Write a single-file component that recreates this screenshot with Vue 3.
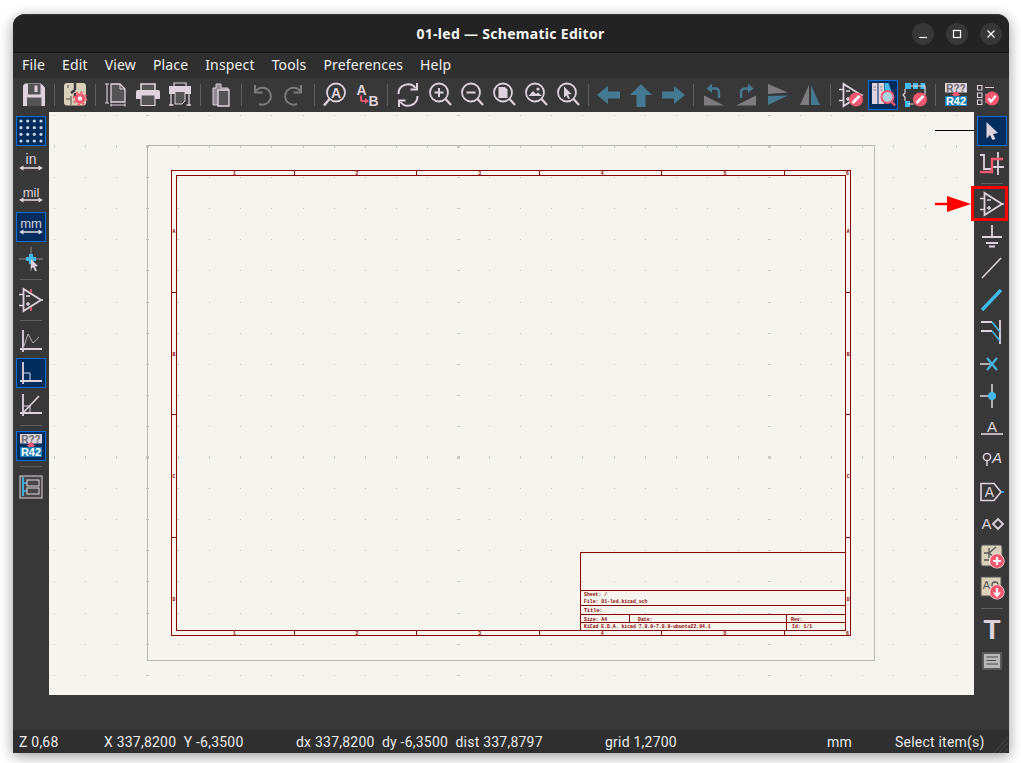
<template>
  <div class="desktop">
    <div class="window">
      <header class="titlebar">
        <span class="title">01-led — Schematic Editor</span>
        <div class="win-controls">
          <button class="win-btn"><svg width="10" height="10" viewBox="0 0 10 10"><path d="M1 8.5H9" stroke="#fff" stroke-width="1.2" /></svg></button>
          <button class="win-btn"><svg width="10" height="10" viewBox="0 0 10 10"><rect x="1.5" y="1.5" width="7" height="7" fill="none" stroke="#fff" stroke-width="1.2" /></svg></button>
          <button class="win-btn"><svg width="10" height="10" viewBox="0 0 10 10"><path d="M1.5 1.5L8.5 8.5M8.5 1.5L1.5 8.5" stroke="#fff" stroke-width="1.2" /></svg></button>
        </div>
      </header>

      <nav class="menubar">
        <span v-for="m in menus" :key="m" class="menu-item">{{ m }}</span>
      </nav>

      <div class="toolbar top">
        <template v-for="(t, i) in topTools" :key="i">
          <span v-if="t === '|'" class="sep"></span>
          <button v-else class="tool" :class="{ active: activeTools.includes(t) }">
            <svg width="24" height="24" viewBox="0 0 24 24" v-html="icons[t]"></svg>
          </button>
        </template>
      </div>

      <div class="middle">
        <aside class="toolbar side left">
          <template v-for="(t, i) in leftTools" :key="i">
            <span v-if="t === '|'" class="sep"></span>
            <button v-else class="tool" :class="{ active: activeTools.includes(t) }">
              <svg width="24" height="24" viewBox="0 0 24 24" v-html="icons[t]"></svg>
            </button>
          </template>
        </aside>

        <main class="canvas">
          <svg width="925" height="583" viewBox="49 112 925 583" class="sheet">
            <rect v-for="d in gridDots" :key="d.k" :x="d.x" :y="d.y" :width="d.w" :height="d.h" fill="#cbcbc7" />
            <g shape-rendering="crispEdges" fill="none">
              <rect x="147.5" y="145.5" width="727" height="515" stroke="#b8b8b4" />
              <g stroke="#8b0000">
                <rect x="171.5" y="170.5" width="679" height="465" />
                <rect x="176.5" y="175.5" width="669" height="455" />
                <path d="M580.5 630V552.5H846M580.5 590.5H846M580.5 605.5H846M580.5 614.5H846M580.5 622.5H846M629.5 614.5V622.5M786.5 614.5V630" />
                <path v-for="x in tickX" :key="'x' + x" :d="`M${x}.5 170V176M${x}.5 630V636`" />
                <path v-for="y in tickY" :key="'y' + y" :d="`M171 ${y}.5H177M846 ${y}.5H851`" />
              </g>
            </g>
            <g class="sheet-text">
              <text v-for="(l, i) in '123456'" :key="'t' + i" :x="233 + i * 122.6" y="175">{{ l }}</text>
              <text v-for="(l, i) in '123456'" :key="'b' + i" :x="233 + i * 122.6" y="635">{{ l }}</text>
              <text v-for="(l, i) in 'ABCD'" :key="'l' + i" x="172.6" :y="233 + i * 122.5">{{ l }}</text>
              <text v-for="(l, i) in 'ABCD'" :key="'r' + i" x="846.8" :y="233 + i * 122.5">{{ l }}</text>
              <text x="584" y="595.5">Sheet: /</text>
              <text x="584" y="603">File: 01-led.kicad_sch</text>
              <text x="584" y="611.5" class="big">Title:</text>
              <text x="584" y="621">Size: A4</text>
              <text x="638" y="621">Date:</text>
              <text x="791" y="621">Rev:</text>
              <text x="584" y="628">KiCad E.D.A.  kicad 7.0.9-7.0.9-ubuntu22.04.1</text>
              <text x="792" y="628">Id: 1/1</text>
            </g>
          </svg>
        </main>

        <aside class="toolbar side right">
          <template v-for="(t, i) in rightTools" :key="i">
            <span v-if="t === '|'" class="sep"></span>
            <button v-else class="tool" :class="{ active: activeTools.includes(t) }">
              <svg width="24" height="24" viewBox="0 0 24 24" v-html="icons[t]"></svg>
            </button>
          </template>
        </aside>
      </div>

      <div class="lower"></div>

      <footer class="status">
        <span class="cell c1">Z 0,68</span>
        <span class="cell c2">X 337,8200&nbsp; Y -6,3500</span>
        <span class="cell c3">dx 337,8200&nbsp; dy -6,3500&nbsp; dist 337,8797</span>
        <span class="cell c4">grid 1,2700</span>
        <span class="cell c5">mm</span>
        <span class="cell c6">Select item(s)</span>
        <svg class="grip" width="18" height="22" viewBox="0 0 18 22">
          <path d="M3 22L17 6M8 22L17 11.5M13 22L17 17" stroke="#4c4c4c" stroke-width="1" />
        </svg>
      </footer>

      <!-- tutorial annotations drawn on top of the screenshot -->
      <div class="callout-line"></div>
      <div class="callout-box"></div>
      <svg class="callout-arrow" width="37" height="18" viewBox="0 0 37 18">
        <path d="M0 9H13" stroke="#f00" stroke-width="2.4" />
        <path d="M12 1L36 9L12 17Z" fill="#f00" />
      </svg>
    </div>
  </div>
</template>

<script setup>
const L = '#ded3dd'
const B = '#42b8eb'
const R = '#f4586f'
const D = '#545454'
const T = '#d9d1ba'
const G = '#7d7b7d'
const A = '#457991'

const s = (d, c = L, w = 2) => `<path d="${d}" fill="none" stroke="${c}" stroke-width="${w}"/>`
const f = (d, c = L) => `<path d="${d}" fill="${c}"/>`
const txt = (x, y, str, size, fill = L, extra = '') =>
  `<text x="${x}" y="${y}" font-family="Liberation Sans, sans-serif" font-size="${size}" fill="${fill}" text-anchor="middle" ${extra}>${str}</text>`

const badge = (cx, cy, inner) => `<circle cx="${cx}" cy="${cy}" r="7" fill="${R}"/>` + inner
const pencil = (cx, cy) =>
  badge(cx, cy, s(`M${cx - 3.5} ${cy + 3.5}L${cx + 3.5} ${cy - 3.5}`, '#fff', 2.6))
const mag = inner => `<circle cx="11" cy="9.5" r="9" fill="none" stroke="${L}" stroke-width="1.8"/>` + s('M17.5 16L23 22', L, 2.2) + inner
const opamp = `<path d="M4.5 1V23L22 12Z" fill="none" stroke="${L}" stroke-width="1.8"/>` + s('M0 6.5H4.5M0 17.5H4.5M22 12H24M7 8H11M7 16H11M9 14V18', L, 1.5)
const annotate = f('M1 0H23V9.5H1Z') + txt(12, 8.5, 'R??', 10, '#6a666a', 'font-weight="bold"') +
  f('M9.5 9H14.5V11H16.5L12 15L7.5 11H9.5Z', R) + f('M1 13H23V23H1Z', '#1a7fb5') + txt(12, 22, 'R42', 11, '#fff', 'font-weight="bold"')
const widthArrow = s('M3 17H21', L, 1.6) + f('M0 17L4.5 14.6V19.4ZM24 17L19.5 14.6V19.4Z')

const icons = {
  save: f('M3 .5H19L23 4.5V23H1V2.5Z') + f('M6 1H18.5V11.5H6Z', D) + f('M12.5 2.5H15.5V9H12.5Z') + f('M5 14.5H19.5V23H5Z', D),
  setup: `<rect x="1" y="0" width="22" height="22.5" rx="3" fill="${T}"/>` + s('M12 0V7M12 7L8 10M12 10V14', '#3a3a3a', 2.4) + s('M5 2V5M3 16H8M8 13V22', '#77736a', 1.4) +
    `<circle cx="17" cy="15.5" r="6.4" fill="none" stroke="${R}" stroke-width="1.8" stroke-dasharray="2.2 2.8"/><circle cx="17" cy="15.5" r="3.8" fill="none" stroke="${R}" stroke-width="3"/><circle cx="17" cy="15.5" r="1.8" fill="#fff"/>`,
  plotPage: s('M1 1H5M3 1V20M1 20H5M7 22H21M7 20.5V23.5M21 20.5V23.5', L, 1.1) + `<path d="M7 1H16L21 6V19H7Z" fill="${D}" stroke="${L}" stroke-width="1.3"/>` + s('M16 1V6H21', L, 1),
  print: `<path d="M5 7V1H19V7" fill="${D}" stroke="${L}" stroke-width="1.6"/>` + f('M2 7H22Q24 7 24 9V16H0V9Q0 7 2 7Z') + `<path d="M5 12H19V22.5H5Z" fill="${D}" stroke="${L}" stroke-width="1.2"/>`,
  plot: f('M1 3H23V11H1Z') + `<path d="M6 3V0H18V3" fill="none" stroke="${L}" stroke-width="1.2"/>` + s('M3 11V22M21 11V22M1 22H5.5M18.5 22H23', L, 1.3) + f('M7 9H17V18L14 21H7Z', D) + s('M7 9V21H14L17 18V9', L, 1),
  paste: `<path d="M7 1H12V5H19V22H4V5H7Z" fill="#8d8a8d" stroke="${L}" stroke-width="1"/>` + `<path d="M9 7H20V23H9Z" fill="${D}" stroke="${L}" stroke-width="1.4"/>`,
  undo: s('M5 9A8.5 8.5 0 1 1 9 21', G, 2) + s('M5 2V9.5H12.5', G, 2),
  redo: s('M19 9A8.5 8.5 0 1 0 15 21', G, 2) + s('M19 2V9.5H11.5', G, 2),
  find: `<circle cx="13" cy="9.5" r="9" fill="none" stroke="${L}" stroke-width="1.8"/>` + s('M7 15.5L1 22.5', L, 2.4) + txt(13, 14.5, 'A', 14, L, 'font-weight="bold"'),
  replace: txt(6.5, 11.5, 'A', 14, L, 'font-weight="bold"') + txt(18.5, 22.5, 'B', 14, L, 'font-weight="bold"') + s('M6 12.5V16.5Q6 18 8 18H11', R, 2) + f('M10 15L14 18L10 21Z', R),
  refresh: s('M2.5 11A9.5 9.5 0 0 1 19.5 5M21.5 13A9.5 9.5 0 0 1 4.5 19', L, 2) + s('M21 0V6.5H14.5M3 24V17.5H9.5', L, 2),
  zoomIn: mag(s('M6.5 9.5H15.5M11 5V14', L, 2)),
  zoomOut: mag(s('M6.5 9.5H15.5', L, 2)),
  zoomFit: mag(f('M6.5 4H13L15.5 6.5V15H6.5Z')),
  zoomObjects: mag(f('M4.5 13L9 8L12 11L14 9.5L18 13Z') + `<circle cx="14" cy="6" r="1.6" fill="${L}"/>`),
  zoomSel: mag(f('M8 3.5L15.5 11L12 11.5L14 15.5L12 16L10.5 12.5L8 14.5Z')),
  left: f('M0 12L11 3V8.5H23V15.5H11V21Z', A),
  up: f('M12 1L23 12H16.5V24H7.5V12H1Z', A),
  right: f('M24 12L13 3V8.5H1V15.5H13V21Z', A),
  rotL: f('M2 22.5H22L2 12.5Z', G) + s('M8 5.5H13Q17 5.5 17 10V15', A, 2.4) + f('M10 .5V10L4.5 5.5Z', A),
  rotR: f('M22 22.5H2L22 12.5Z', G) + s('M16 5.5H11Q7 5.5 7 10V15', A, 2.4) + f('M14 .5V10L19.5 5.5Z', A),
  mirrorV: f('M2 1L22 9.5L2 11Z', G) + f('M2 13L22 12.5L2 22Z', A),
  mirrorH: f('M11 2V22H2Z', G) + f('M13 2V22H22Z', A),
  symEdit: opamp + pencil(17, 16.5),
  libBrowser: f('M1 0H6.5V21H1Z') + f('M7.5 0H13V21H7.5Z') + s('M2.5 4H5M2.5 7H5M9 4H11.5M9 7H11.5', '#8d8a8d', 1) + f('M13.5 0H17.5L21 10H13.5Z', B) +
    `<circle cx="16.5" cy="14" r="6" fill="#a9d2dc" stroke="${R}" stroke-width="2"/>` + s('M20.5 18.5L24 22.5', R, 2.4),
  fpEdit: f('M2 0H8V6H2ZM10 0H15V6H10ZM17.5 0H22V6H17.5ZM2 18H7V24H2Z', B) + s('M8 3H22V12M2 6V10L0 12L2 14V18M5 21H11', L, 1.2) + pencil(17, 16.5),
  annotate,
  annotateTop: annotate,
  erc: s('M1.5 2.5H6V7H1.5ZM1.5 10H6V14.5H1.5ZM1.5 17H6V21.5H1.5Z', L, 1.1) + s('M9 4.5H18M9 12H12M9 19H12', L, 1.2) +
    badge(16, 15.5, s('M12.5 15.5L15 18.5L19.8 12.8', '#fff', 2.2)),
  grid: [2, 8.7, 15.3, 22].flatMap(y => [2, 8.7, 15.3, 22].map(x => `<circle cx="${x}" cy="${y}" r="1.6" fill="#cfd3de"/>`)).join(''),
  inch: txt(12, 13, 'in', 14) + widthArrow,
  mil: txt(12, 14, 'mil', 13) + widthArrow,
  mm: txt(12, 13, 'mm', 13) + widthArrow,
  cross: s('M0 12H24M12 0V24', '#8c8a8c', 1) + s('M7 12H17M12 7V17', B, 4) + f('M12 12L19 19L16 19.5L18 24L16 24L14 20L12 22Z'),
  symPin: opamp + s('M12 1V5M12 19V23', R, 1.6),
  axesLog: s('M4 1V23M1 20H23', L, 1.8) + s('M4 20L9 5L14 14L20 8', '#b5adb4', 1),
  axesSq: s('M4 1V23M1 20H23', L, 1.8) + s('M4 12H11V20', L, 1),
  axesDiag: s('M4 1V23M1 20H23', L, 1.8) + s('M4 20L20 3', L, 1.6) + s('M4 13H11V20', L, 1),
  hierarchy: `<rect x="1" y="1" width="22" height="22" fill="#464646" stroke="${L}" stroke-width="1"/>` + s('M4 2V21M4 8H8M4 16H8', B, 1.7) + `<rect x="8" y="5" width="12" height="6" fill="none" stroke="${L}" stroke-width="1"/><rect x="8" y="13" width="12" height="6" fill="none" stroke="${L}" stroke-width="1"/>`,
  cursor: f('M6.5 3L18 14L13 15L15.5 20L12.5 21L10 16L6.5 19.5Z'),
  route: s('M0 4H4V18H12', L, 1.8) + s('M18 1V24M12 16H24', L, 1.8) + s('M0 21H12V8H23', R, 2.4),
  opampPlace: opamp,
  ground: s('M12 1V13', L, 1.8) + s('M2 13H22', L, 2) + s('M6 19H18M9 22.5H15', L, 1.8),
  line: s('M2 22L21 2', L, 1.5),
  bus: s('M2 22L21 2', B, 3.4),
  busEntry: s('M1 2H12M1 11H12M20 0V24', L, 1.8) + s('M12 2L20 12M12 11L20 21', B, 1.5),
  noConnect: s('M0 12H10', L, 1.5) + s('M7 6L17 18M17 6L7 18', B, 2),
  junction: s('M0 12H12M12 0V24', L, 1.5) + `<circle cx="12" cy="12" r="4" fill="${B}"/>`,
  label: txt(12, 16, 'A', 15) + s('M1 18H23', L, 1.6),
  netLabel: `<circle cx="7" cy="9" r="3.6" fill="none" stroke="${L}" stroke-width="1.5"/>` + s('M7 13V18', L, 1.5) + txt(17, 15, 'A', 15, L, 'font-style="italic"'),
  globalLabel: `<path d="M1 3.5H14L21 12L14 20.5H1Z" fill="none" stroke="${L}" stroke-width="1.6"/>` + txt(9.5, 17, 'A', 14) + s('M21 12H24', B, 1.6),
  hierLabel: txt(6.5, 17, 'A', 15) + `<path d="M13 12L18 7L23 12L18 17Z" fill="none" stroke="${L}" stroke-width="1.8"/>`,
  sheet: `<rect x="1" y="1" width="21" height="21" rx="2" fill="${T}" stroke="${D}"/>` + s('M4 9H9M9 4V14M9 9L16 3M9 9L16 15M4 16H9', '#555', 1.3) +
    `<circle cx="17" cy="17" r="7.6" fill="#fff"/>` + badge(17, 17, s('M13 17H21M17 13V21', '#fff', 2.2)),
  import: `<rect x="1" y="1" width="20" height="19" fill="${T}" stroke="${D}"/>` + txt(6.5, 13, 'A', 11, '#555') + `<circle cx="15" cy="9" r="3" fill="none" stroke="#555" stroke-width="1.3"/>` +
    `<circle cx="17" cy="16" r="7.6" fill="#fff"/>` + badge(17, 16, s('M17 12V19', '#fff', 2.2) + s('M14 16.5L17 20L20 16.5', '#fff', 1.8)),
  text: txt(12, 22, 'T', 28, L, 'font-weight="bold"'),
  textBox: f('M2 3H22V21H2Z', '#5a5a5a') + f('M4 5H20V19H4Z', '#b8b8b8') + s('M6.5 8H18M6.5 11.5H16M6.5 15H18', '#4a4a4a', 1.2)
}

const menus = ['File', 'Edit', 'View', 'Place', 'Inspect', 'Tools', 'Preferences', 'Help']

const topTools = [
  'save', '|', 'setup', '|', 'plotPage', 'print', 'plot', '|', 'paste', '|', 'undo', 'redo', '|',
  'find', 'replace', '|', 'refresh', 'zoomIn', 'zoomOut', 'zoomFit', 'zoomObjects', 'zoomSel', '|',
  'left', 'up', 'right', '|', 'rotL', 'rotR', 'mirrorV', 'mirrorH', '|',
  'symEdit', 'libBrowser', 'fpEdit', '|', 'annotateTop', 'erc'
]

const leftTools = ['grid', 'inch', 'mil', 'mm', 'cross', '|', 'symPin', '|', 'axesLog', 'axesSq', 'axesDiag', '|', 'annotate', '|', 'hierarchy']

const rightTools = [
  'cursor', 'route', '|', 'opampPlace', 'ground', 'line', 'bus', 'busEntry', 'noConnect', 'junction', 'label',
  'netLabel', 'globalLabel', 'hierLabel', 'sheet', 'import', '|', 'text', 'textBox'
]

const activeTools = ['libBrowser', 'grid', 'mm', 'axesSq', 'annotate', 'cursor']

const tickX = [294, 416, 539, 661, 784]
const tickY = [292, 414, 537]

// every tenth grid line is drawn a little stronger
const gridDots = []
for (let i = -3; i < 27; i++) {
  for (let j = -1; j < 18; j++) {
    const majorX = i % 10 === 0
    const majorY = j % 10 === 0
    gridDots.push({
      k: i + '_' + j,
      x: Math.round(147 + i * 31.1) - (majorX ? 1 : 0),
      y: Math.round(146 + j * 31.1) - (majorY ? 1 : 0),
      w: majorX ? 3 : 1,
      h: majorY ? 3 : 1
    })
  }
}
</script>

<style scoped>
.desktop {
  width: 1021px;
  height: 763px;
  padding: 14px 12px 10px 13px;
  box-sizing: border-box;
  background: #fff;
  overflow: hidden;
}

.window {
  position: relative;
  width: 996px;
  height: 739px;
  display: flex;
  flex-direction: column;
  background: #383838;
  border-radius: 12px 12px 0 0;
  box-shadow: 0 3px 14px rgba(0, 0, 0, 0.4);
  font-family: "Noto Sans", "Liberation Sans", sans-serif;
  color: #f2f2f2;
}

.titlebar {
  position: relative;
  height: 37px;
  flex: none;
  display: flex;
  align-items: center;
  justify-content: center;
  background: #232323;
  border-top: 1px solid #3a3a3a;
  border-bottom: 1px solid #161616;
  border-radius: 12px 12px 0 0;
  margin-bottom: -1px;
}

.title {
  font-size: 14px;
  font-weight: 700;
  letter-spacing: 0.3px;
  color: #f5f5f5;
  margin-left: -1px;
}

.win-controls {
  position: absolute;
  right: 7px;
  top: 8px;
  display: flex;
  gap: 12px;
}

.win-btn {
  width: 22px;
  height: 22px;
  padding: 0;
  border: none;
  border-radius: 50%;
  background: #373737;
  display: flex;
  align-items: center;
  justify-content: center;
}

.menubar {
  height: 26px;
  flex: none;
  display: flex;
  align-items: center;
  padding-bottom: 2px;
  box-sizing: border-box;
  background: #2f2f2f;
  font-size: 14px;
  letter-spacing: 0.15px;
}

.menu-item {
  padding: 0 8.5px;
  color: #f0f0f0;
}

.menu-item:first-child {
  padding-left: 9px;
}

.toolbar {
  background: #383838;
  display: flex;
  flex: none;
}

.toolbar.top {
  height: 34px;
  align-items: center;
  padding-left: 5px;
}

.toolbar.side {
  flex-direction: column;
  padding-top: 3px;
}

.toolbar.left {
  width: 36px;
  padding-left: 2px;
  box-sizing: border-box;
}

.toolbar.right {
  width: 35px;
  padding-left: 2px;
  box-sizing: border-box;
}

.tool {
  width: 32px;
  height: 32px;
  flex: none;
  padding: 0;
  border: 1px solid transparent;
  background: none;
  display: flex;
  align-items: center;
  justify-content: center;
  box-sizing: border-box;
}

.tool svg {
  overflow: visible;
}

.tool.active {
  background: #002c5e;
  border-color: #0a6ed8;
  width: 30px;
  height: 30px;
  margin: 1px;
}

.sep {
  flex: none;
  background: #5f5f5f;
}

.toolbar.top .sep {
  width: 1px;
  height: 22px;
  margin: 0 4px;
}

.toolbar.side .sep {
  width: 22px;
  height: 1px;
  margin: 4px 5px;
}

.middle {
  flex: none;
  height: 583px;
  display: flex;
}

.canvas {
  flex: 1;
  background: #f5f4ef;
  overflow: hidden;
  line-height: 0;
}

.sheet {
  display: block;
}

.sheet-text text {
  font-family: "Liberation Mono", monospace;
  font-size: 4.8px;
  font-weight: 700;
  fill: #8b0000;
}

.sheet-text text.big {
  font-size: 5.2px;
}

.lower {
  flex: none;
  height: 35px;
  background: #383838;
}

.status {
  flex: 1;
  display: flex;
  align-items: center;
  background: #2f2f2f;
  padding-left: 6px;
  font-family: Roboto, "Noto Sans", sans-serif;
  font-size: 14px;
  letter-spacing: 0.22px;
  color: #eaeaea;
  white-space: nowrap;
}

.cell {
  flex: none;
}

.c1 { width: 85px; }
.c2 { width: 192px; }
.c3 { width: 309px; }
.c4 { width: 222px; }
.c5 { width: 68px; }
.c6 { width: 96px; }

.grip {
  margin-left: auto;
  align-self: flex-end;
}

.callout-line {
  position: absolute;
  left: 922px;
  top: 116px;
  width: 39px;
  height: 1px;
  background: #000;
}

.callout-box {
  position: absolute;
  left: 958px;
  top: 172px;
  width: 37px;
  height: 35px;
  border: 3px solid #f00;
  box-sizing: border-box;
}

.callout-arrow {
  position: absolute;
  left: 922px;
  top: 181px;
}
</style>

<style>
html,
body {
  margin: 0;
  background: #fff;
}
</style>
